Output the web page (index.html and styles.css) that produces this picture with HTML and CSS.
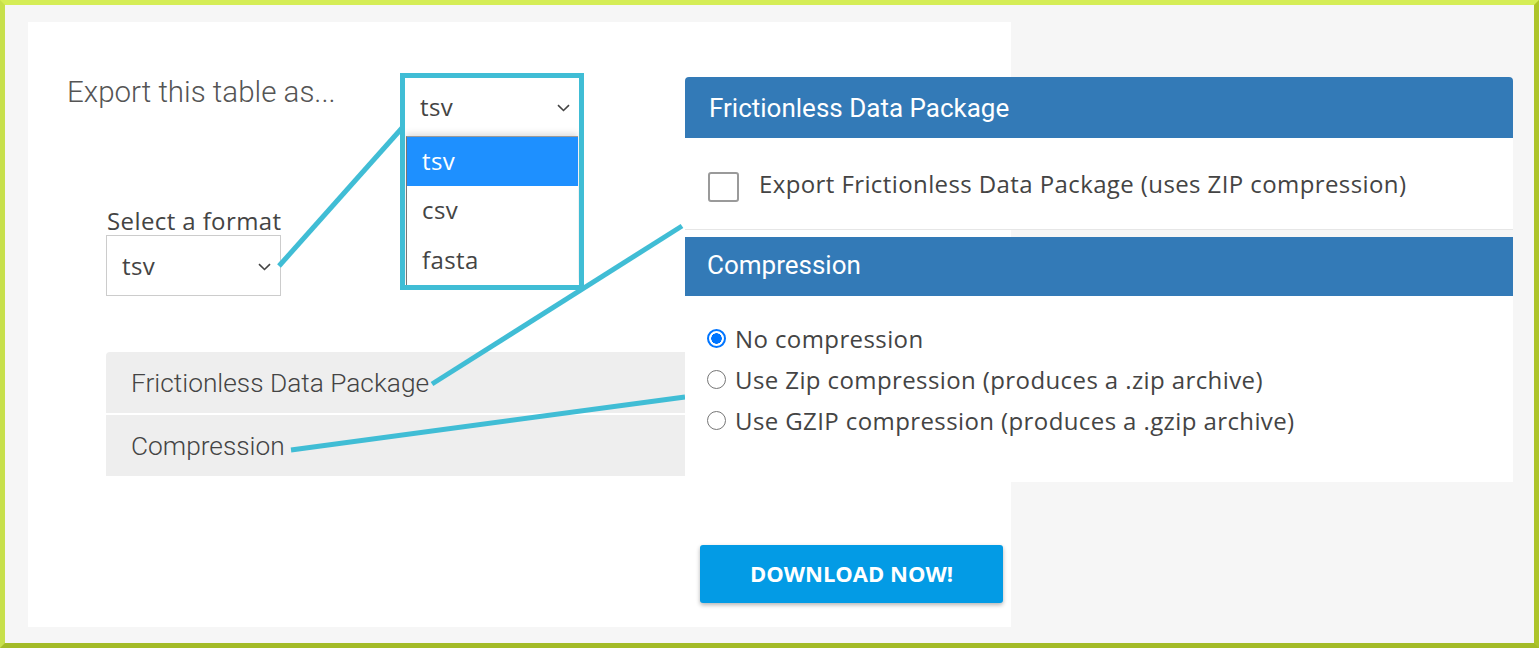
FILE: index.html
```html
<!DOCTYPE html>
<html lang="en">
<head>
<meta charset="utf-8">
<title>Export this table</title>
<link rel="stylesheet" href="styles.css">
</head>
<body>
<div class="frame">
  <div class="sheet">
    <h1 class="title">Export this table as...</h1>
    <div class="field">
      <label class="field-label">Select a format</label>
      <div class="select">
        <span>tsv</span>
        <svg class="chev" width="13" height="8" viewBox="0 0 13 8"><path d="M1 1.2 L6.5 6.5 L12 1.2" fill="none" stroke="#444" stroke-width="1.6"/></svg>
      </div>
    </div>
    <div class="accordion">
      <div class="acc-item acc-first">Frictionless Data Package</div>
      <div class="acc-item">Compression</div>
    </div>
    <button class="download">DOWNLOAD NOW!</button>
  </div>

  <svg class="connectors" width="1539" height="648" viewBox="0 0 1539 648">
    <line x1="279" y1="266" x2="402" y2="128" />
    <line x1="432" y1="384" x2="682" y2="226" />
    <line x1="291" y1="450" x2="685" y2="397" />
  </svg>

  <div class="callout">
    <div class="cs-select">
      <span>tsv</span>
      <svg class="chev" width="13" height="8" viewBox="0 0 13 8"><path d="M1 1.2 L6.5 6.5 L12 1.2" fill="none" stroke="#444" stroke-width="1.6"/></svg>
    </div>
    <div class="cs-list">
      <div class="cs-opt cs-active">tsv</div>
      <div class="cs-opt">csv</div>
      <div class="cs-opt">fasta</div>
    </div>
  </div>

  <div class="panel">
    <div class="panel-head">Frictionless Data Package</div>
    <div class="panel-body body-check">
      <span class="checkbox"></span>
      <span class="check-label">Export Frictionless Data Package (uses ZIP compression)</span>
    </div>
    <div class="panel-head head-second">Compression</div>
    <div class="panel-body body-radios">
      <div class="radio-row"><span class="radio radio-on"></span><span>No compression</span></div>
      <div class="radio-row"><span class="radio"></span><span>Use Zip compression (produces a .zip archive)</span></div>
      <div class="radio-row"><span class="radio"></span><span>Use GZIP compression (produces a .gzip archive)</span></div>
    </div>
  </div>
</div>
</body>
</html>
```

FILE: styles.css
```css
* { box-sizing: border-box; }
html, body { margin: 0; padding: 0; }
body { width: 1539px; height: 648px; overflow: hidden; background: #f6f6f6; }

.frame {
  position: relative;
  width: 1539px;
  height: 648px;
  background: #f6f6f6;
  border-style: solid;
  border-width: 5px;
  border-color: #d5ed56 #adc42a #a3bb27 #c7e04b;
  font-family: "Open Sans", "Noto Sans", sans-serif;
  color: #444;
  letter-spacing: 0.4px;
}

.sheet {
  margin: 17px 0 0 23px;
  width: 983px;
  height: 605px;
  background: #fff;
  padding: 56px 0 0 39px;
  display: flex;
  flex-direction: column;
  align-items: flex-start;
}

.title {
  margin: 0;
  font-family: Roboto, sans-serif;
  font-weight: 300;
  font-size: 29.5px;
  line-height: 28px;
  letter-spacing: 0;
  color: #555;
}

.field {
  margin: 100px 0 0 39px;
}
.field-label {
  display: block;
  height: 29px;
  font-size: 24px;
  line-height: 29px;
  color: #444;
  padding-left: 1px;
}
.select {
  width: 175px;
  height: 61px;
  border: 1px solid #ccc;
  display: flex;
  align-items: center;
  justify-content: space-between;
  padding: 0 9px 0 15px;
  font-size: 24px;
  line-height: 28px;
}
.chev { display: block; margin-top: 2px; }

.accordion {
  margin: 56px 0 0 39px;
  width: 874px;
}
.acc-item {
  height: 61px;
  background: #eee;
  display: flex;
  align-items: center;
  padding-left: 25px;
  font-family: Roboto, sans-serif;
  font-weight: 300;
  font-size: 26.3px;
  letter-spacing: 0;
  color: #444;
}
.acc-first { border-radius: 4px 4px 0 0; }
.acc-item + .acc-item { margin-top: 2px; }

.download {
  align-self: flex-end;
  margin: 69px 8px 0 0;
  width: 303px;
  height: 58px;
  border: none;
  border-radius: 3px;
  background: #039be5;
  color: #fff;
  font-family: "Open Sans", sans-serif;
  font-weight: 700;
  font-size: 22px;
  letter-spacing: 0;
  box-shadow: 0 2px 4px rgba(0,0,0,0.3);
  padding: 0 0 2px 0;
}

.connectors {
  position: absolute;
  left: -5px;
  top: -5px;
  pointer-events: none;
}
.connectors line {
  stroke: #40bdd5;
  stroke-width: 5;
}

.callout {
  position: absolute;
  left: 395px;
  top: 68px;
  width: 184px;
  height: 217px;
  border: 5px solid #40bdd5;
  background: #fff;
  overflow: hidden;
}
.cs-select {
  height: 58px;
  display: flex;
  align-items: center;
  justify-content: space-between;
  padding: 0 9px 0 15px;
  font-size: 24px;
  line-height: 28px;
}
.cs-list {
  margin: 0 1px 0 1px;
  border-left: 1px solid #767676;
  border-top: 1px solid #9a9a9a;
  box-shadow: 0 -3px 6px rgba(0,0,0,0.12);
  background: #fff;
}
.cs-opt {
  height: 49.5px;
  display: flex;
  align-items: center;
  padding-left: 15px;
  padding-bottom: 2px;
  font-size: 24px;
  color: #444;
}
.cs-active { background: #1e90ff; color: #fff; height: 49px; }

.panel {
  position: absolute;
  left: 680px;
  top: 72px;
  width: 828px;
}
.panel-head {
  height: 61px;
  background: #337ab7;
  color: #fff;
  font-family: Roboto, sans-serif;
  font-weight: 400;
  font-size: 26px;
  letter-spacing: 0;
  display: flex;
  align-items: center;
  padding-left: 24px;
  border-radius: 4px 4px 0 0;
}
.head-second {
  height: 59px;
  margin-top: 7px;
  padding-left: 22px;
  padding-bottom: 4px;
  border-radius: 0;
}
.panel-body { background: #fff; }
.body-check {
  height: 92px;
  border-bottom: 1px solid #e6e6e6;
  display: flex;
  align-items: center;
  padding-left: 23px;
}
.checkbox {
  width: 31px;
  height: 30px;
  border: 2.5px solid #9a9a9a;
  border-radius: 3px;
  margin: 6px 20px 0 0;
  flex: none;
}
.check-label { font-size: 24px; color: #444; }

.body-radios {
  height: 186px;
  padding: 22px 0 0 22px;
}
.radio-row {
  height: 41px;
  display: flex;
  align-items: center;
  font-size: 24px;
  color: #444;
}
.radio {
  width: 19px;
  height: 19px;
  border-radius: 50%;
  border: 1px solid #767676;
  margin-right: 9px;
  flex: none;
  background: #fff;
}
.radio-on {
  border: 2px solid #0075ff;
  background: radial-gradient(circle, #0075ff 0 5px, #fff 5.5px);
}
```
